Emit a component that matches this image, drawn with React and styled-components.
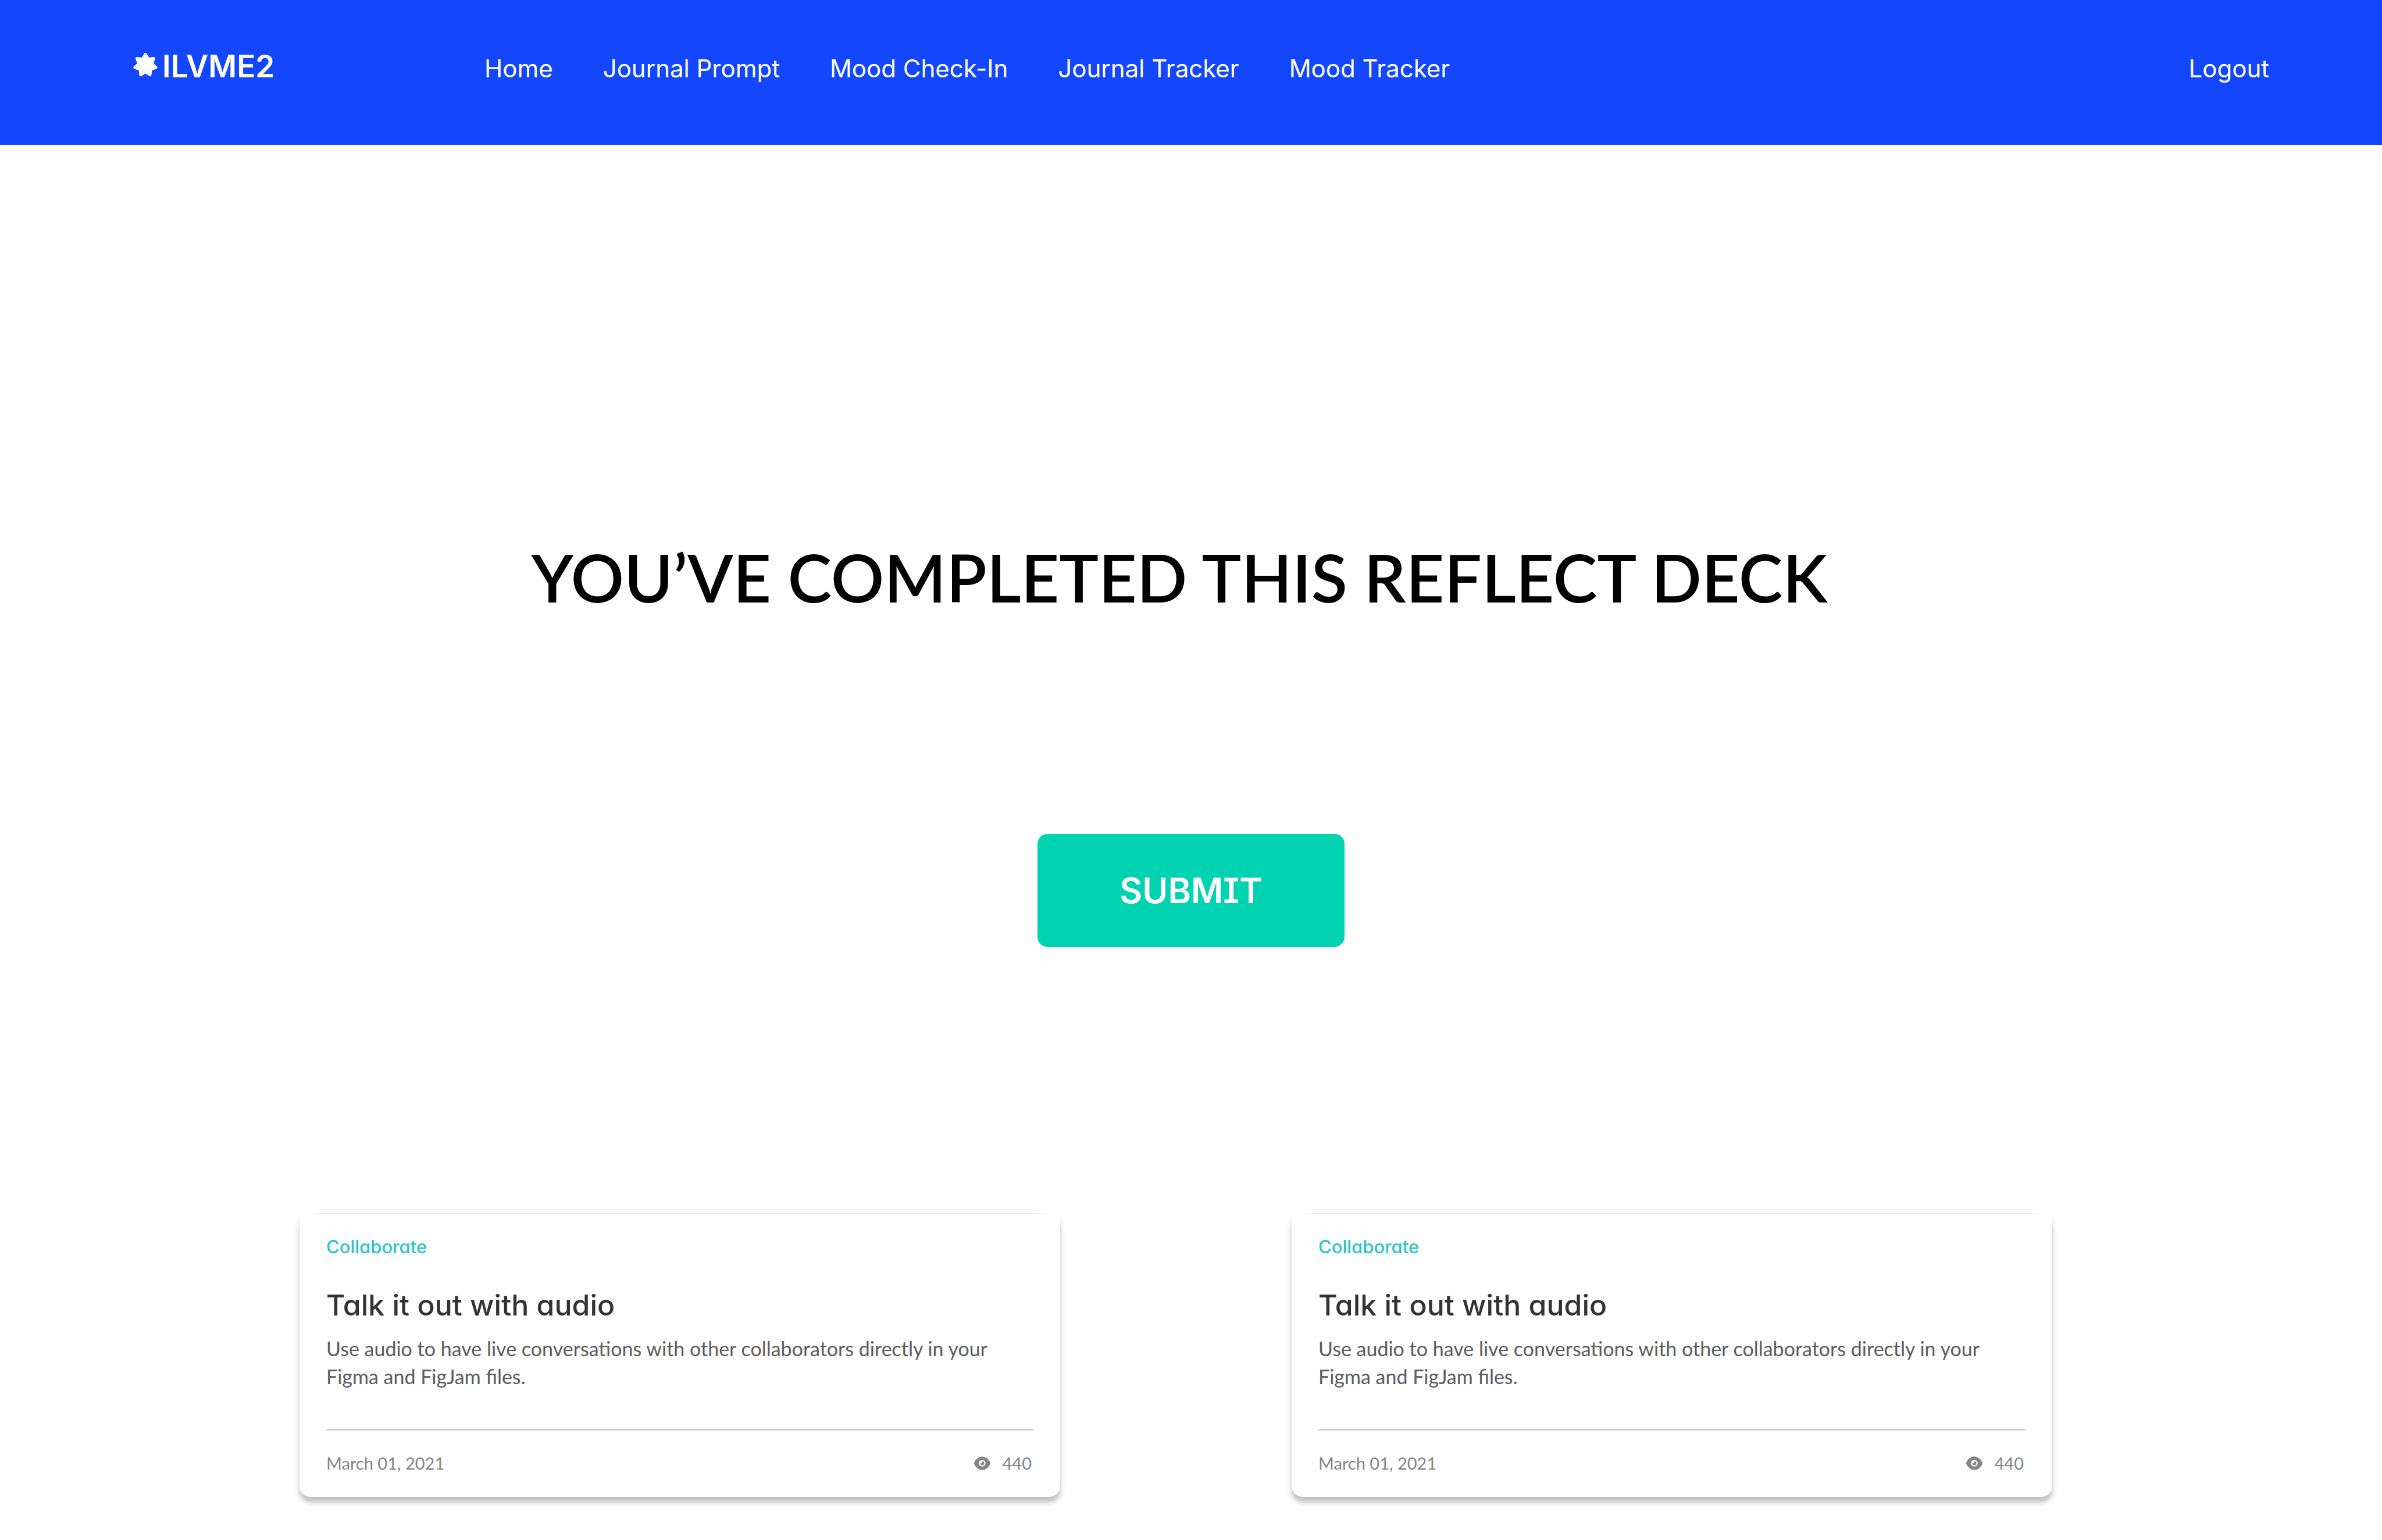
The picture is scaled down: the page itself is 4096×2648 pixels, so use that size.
import React from "react";
import styled, { createGlobalStyle } from "styled-components";

const GlobalStyle = createGlobalStyle`
  *, *::before, *::after { box-sizing: border-box; }
  body {
    margin: 0;
    background: #fefefe;
    font-family: Lato, "Liberation Sans", sans-serif;
  }
  h1, h2, p { margin: 0; font-weight: inherit; }
`;

const Header = styled.header`
  display: grid;
  grid-template-columns: 604px 1fr auto;
  align-items: baseline;
  padding: 82px 194px 103px 229px;
  background: #1447fc;
  color: #fff;
  font-family: Inter, "Liberation Sans", sans-serif;
`;

const Brand = styled.a`
  display: flex;
  align-items: center;
  gap: 8px;
  color: inherit;
  text-decoration: none;
  font-size: 53px;
  line-height: 64px;
  font-weight: 600;
`;

const StarMark = styled.svg`
  width: 42px;
  height: 42px;
  margin-bottom: 4px;
`;

const Nav = styled.nav`
  display: flex;
  gap: 86px;
`;

const NavLink = styled.a`
  color: inherit;
  text-decoration: none;
  white-space: nowrap;
  font-size: 42px;
  line-height: 52px;
  font-weight: 400;
`;

const Main = styled.main`
  display: flex;
  flex-direction: column;
  align-items: center;
  padding: 675px 0 75px;
`;

const Title = styled.h1`
  padding-right: 40px;
  color: #000;
  font-size: 114px;
  line-height: 136px;
  font-weight: 600;
  text-align: center;
`;

const SubmitButton = styled.button`
  margin: 374px 0 458px;
  padding: 57px 141px;
  border: 0;
  border-radius: 17px;
  background: #00d3b2;
  color: #fff;
  font-family: Inter, "Noto Sans", sans-serif;
  font-feature-settings: "cv08";
  font-size: 60px;
  line-height: 80px;
  font-weight: 600;
`;

const Cards = styled.section`
  align-self: stretch;
  display: grid;
  grid-template-columns: 1fr 1fr;
  column-gap: 398px;
  padding: 0 567px 0 515px;
`;

const Card = styled.article`
  padding: 38px 46px 40px;
  border-radius: 19px;
  background: linear-gradient(90deg, transparent 19px, #ece4e6 40px, #ece4e6 calc(100% - 40px), transparent calc(100% - 19px)) top / 100% 1px no-repeat #fefefe;
  box-shadow: 0 9px 9px rgba(0, 0, 0, 0.25);
`;

const Category = styled.p`
  color: #2bc4cc;
  font-family: Inter, "Liberation Sans", sans-serif;
  font-feature-settings: "cv11";
  font-size: 31px;
  line-height: 40px;
  font-weight: 500;
`;

const CardTitle = styled.h2`
  margin-top: 50px;
  color: #333;
  font-family: Inter, "Liberation Sans", sans-serif;
  font-feature-settings: "cv11";
  font-size: 50px;
  line-height: 60px;
  font-weight: 500;
`;

const Summary = styled.p`
  margin-top: 21px;
  color: #5c5c5c;
  font-size: 34px;
  line-height: 48px;
`;

const CardFooter = styled.footer`
  display: flex;
  justify-content: space-between;
  margin-top: 66px;
  padding: 38px 3px 0 0;
  border-top: 3px solid #d6d6d6;
  color: #858585;
  font-size: 29px;
  line-height: 36px;
`;

const Views = styled.span`
  display: flex;
  align-items: center;
  gap: 21px;
`;

const EyeIcon = styled.svg`
  width: 28px;
  height: 24px;
`;

const starPoints = Array.from({ length: 14 }, (_, i) => {
  const radius = i % 2 ? 27 : 44;
  const angle = (i * Math.PI) / 7;
  return `${(radius * Math.sin(angle)).toFixed(2)},${(-radius * Math.cos(angle)).toFixed(2)}`;
}).join(" ");

const Star = () => (
  <StarMark viewBox="-50 -50 100 100" aria-hidden="true">
    <polygon
      points={starPoints}
      fill="currentColor"
      stroke="currentColor"
      strokeWidth="12"
      strokeLinejoin="round"
    />
  </StarMark>
);

const Eye = () => (
  <EyeIcon viewBox="0 0 97 80" aria-hidden="true">
    <path
      fill="currentColor"
      d="M48.500 0C26 0 8 18 1 35Q-1 40 1 45C8 62 26 80 48.500 80S89 62 96 45Q98 40 96 35C89 18 71 0 48.500 0Z"
    />
    <circle cx="48.500" cy="40" r="20" fill="#fefefe" />
    <path
      fill="currentColor"
      d="M48.500 28A12 12 0 1 1 36.500 40Q41 43 45 39T48.500 28Z"
    />
  </EyeIcon>
);

const navItems = ["Home", "Journal Prompt", "Mood Check-In", "Journal Tracker", "Mood Tracker"];

const articles = [
  {
    id: 1,
    category: "Collaborate",
    title: "Talk it out with audio",
    summary:
      "Use audio to have live conversations with other collaborators directly in your Figma and FigJam files.",
    date: "March 01, 2021",
    views: 440,
  },
  {
    id: 2,
    category: "Collaborate",
    title: "Talk it out with audio",
    summary:
      "Use audio to have live conversations with other collaborators directly in your Figma and FigJam files.",
    date: "March 01, 2021",
    views: 440,
  },
];

export default function App() {
  return (
    <>
      <GlobalStyle />
      <Header>
        <Brand href="#">
          <Star />
          ILVME2
        </Brand>
        <Nav>
          {navItems.map((item) => (
            <NavLink key={item} href="#">
              {item}
            </NavLink>
          ))}
        </Nav>
        <NavLink href="#">Logout</NavLink>
      </Header>
      <Main>
        <Title>YOU’VE COMPLETED THIS REFLECT DECK</Title>
        <SubmitButton type="button">SUBMIT</SubmitButton>
        <Cards>
          {articles.map((article) => (
            <Card key={article.id}>
              <Category>{article.category}</Category>
              <CardTitle>{article.title}</CardTitle>
              <Summary>{article.summary}</Summary>
              <CardFooter>
                <time dateTime="2021-03-01">{article.date}</time>
                <Views>
                  <Eye />
                  {article.views}
                </Views>
              </CardFooter>
            </Card>
          ))}
        </Cards>
      </Main>
    </>
  );
}
